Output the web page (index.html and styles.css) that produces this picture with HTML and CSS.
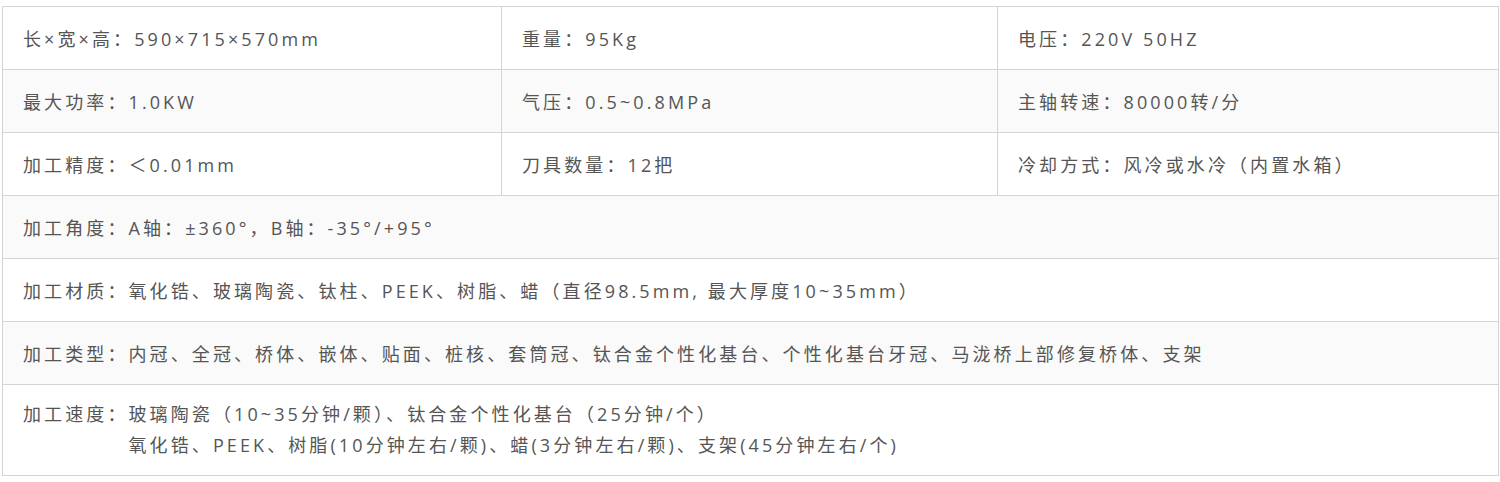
FILE: index.html
```html
<!DOCTYPE html>
<html lang="zh-CN">
<head>
<meta charset="utf-8">
<title>参数</title>
<link rel="stylesheet" href="styles.css">
</head>
<body>
<div class="wrap">
<table class="spec">
  <colgroup><col class="c1"><col class="c2"><col class="c3"></colgroup>
  <tr>
    <td>长×宽×高：590×715×570mm</td>
    <td>重量：95Kg</td>
    <td>电压：220V 50HZ</td>
  </tr>
  <tr class="alt">
    <td>最大功率：1.0KW</td>
    <td>气压：0.5~0.8MPa</td>
    <td>主轴转速：80000转/分</td>
  </tr>
  <tr>
    <td>加工精度：＜0.01mm</td>
    <td>刀具数量：12把</td>
    <td>冷却方式：风冷或水冷（内置水箱）</td>
  </tr>
  <tr class="alt">
    <td colspan="3">加工角度：A轴：±360°，B轴：-35°/+95°</td>
  </tr>
  <tr>
    <td colspan="3">加工材质：氧化锆、玻璃陶瓷、钛柱、PEEK、树脂、蜡（直径98.5mm, 最大厚度10~35mm）</td>
  </tr>
  <tr class="alt">
    <td colspan="3">加工类型：内冠、全冠、桥体、嵌体、贴面、桩核、套筒冠、钛合金个性化基台、个性化基台牙冠、马泷桥上部修复桥体、支架</td>
  </tr>
  <tr>
    <td colspan="3" class="multi">
      <div class="pair">
        <span class="label">加工速度：</span>
        <div class="lines">
          <div>玻璃陶瓷（10~35分钟/颗）、钛合金个性化基台（25分钟/个）</div>
          <div>氧化锆、PEEK、树脂(10分钟左右/颗)、蜡(3分钟左右/颗)、支架(45分钟左右/个)</div>
        </div>
      </div>
    </td>
  </tr>
</table>
</div>
</body>
</html>
```
FILE: styles.css
```css
html, body {
  margin: 0;
  padding: 0;
  background: #ffffff;
}
.wrap {
  padding: 6px 2px 0 2px;
}
.spec {
  width: 1496px;
  border-collapse: collapse;
  table-layout: fixed;
  font-family: "Open Sans", "Noto Sans CJK SC", sans-serif;
  font-size: 18px;
  color: #555555;
  letter-spacing: 3.1px;
}
.c1 { width: 499px; }
.c2 { width: 496px; }
.c3 { width: 501px; }
.spec td {
  border: 1px solid #d4d4d4;
  padding: 17px 20px 15px 20px;
  line-height: 30px;
  height: 30px;
  vertical-align: middle;
  white-space: nowrap;
}
.spec tr.alt td {
  background: #fafafa;
}
.spec td.multi {
  padding-top: 14px;
  padding-bottom: 14px;
}
.pair {
  display: flex;
}
.label {
  flex: none;
}
.lines > div {
  line-height: 31px;
}
```
